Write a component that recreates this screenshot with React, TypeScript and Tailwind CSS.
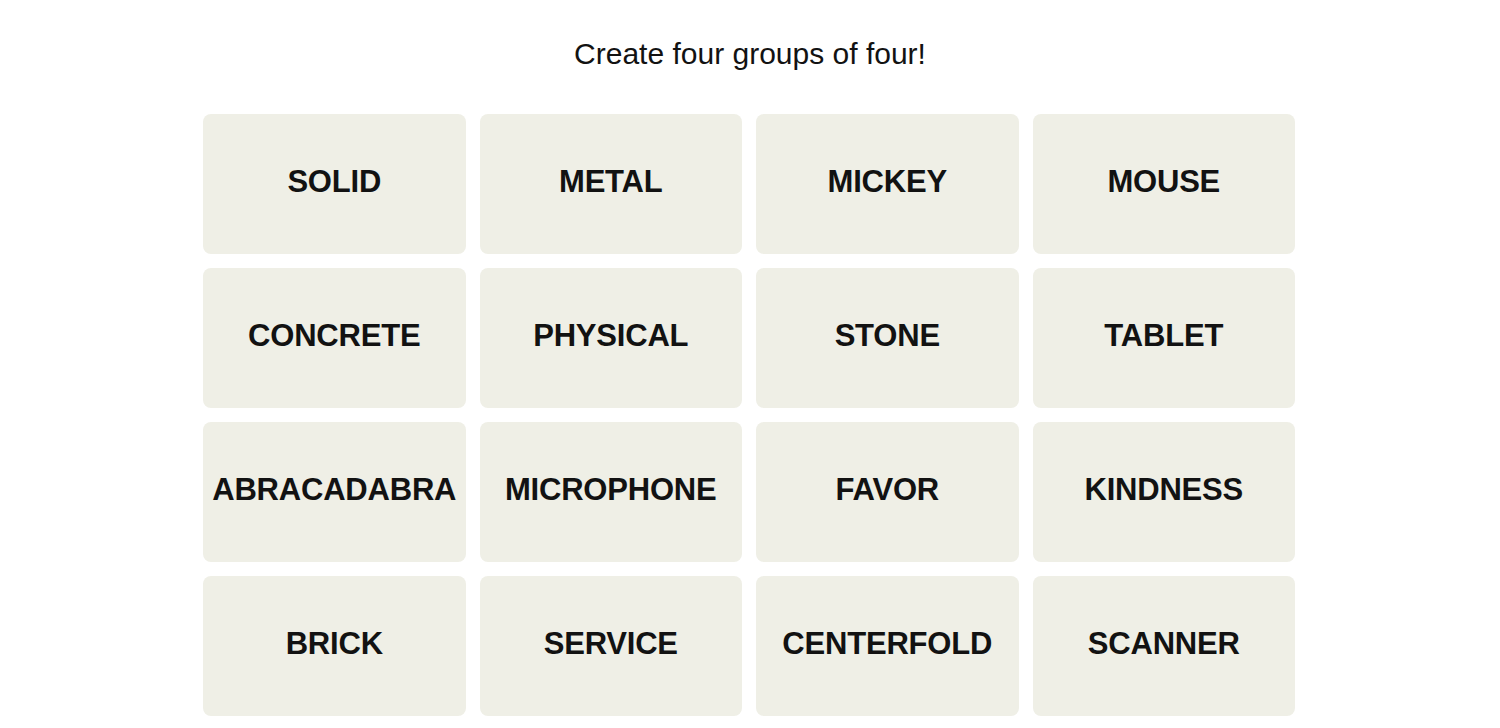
import React from "react";

const words = [
  "SOLID", "METAL", "MICKEY", "MOUSE",
  "CONCRETE", "PHYSICAL", "STONE", "TABLET",
  "ABRACADABRA", "MICROPHONE", "FAVOR", "KINDNESS",
  "BRICK", "SERVICE", "CENTERFOLD", "SCANNER",
];

export default function App() {
  return (
    <div className="min-h-[728px] w-full bg-white flex flex-col items-center" style={{ fontFamily: '"Liberation Sans", Arial, sans-serif' }}>
      <h1 className="mt-[36px] text-[30px] leading-[36px] text-[#121212] font-normal">Create four groups of four!</h1>
      <div className="mt-[42px] w-[1092px] grid grid-cols-4 gap-x-[14px] gap-y-[14px] -translate-x-[1px]">
        {words.map((w) => (
          <div key={w} className="h-[140px] rounded-[8px] bg-[#efefe6] flex items-center justify-center pb-[3px]">
            <span className="text-[31px] font-bold text-[#121212] tracking-[-0.2px]">{w}</span>
          </div>
        ))}
      </div>
    </div>
  );
}
